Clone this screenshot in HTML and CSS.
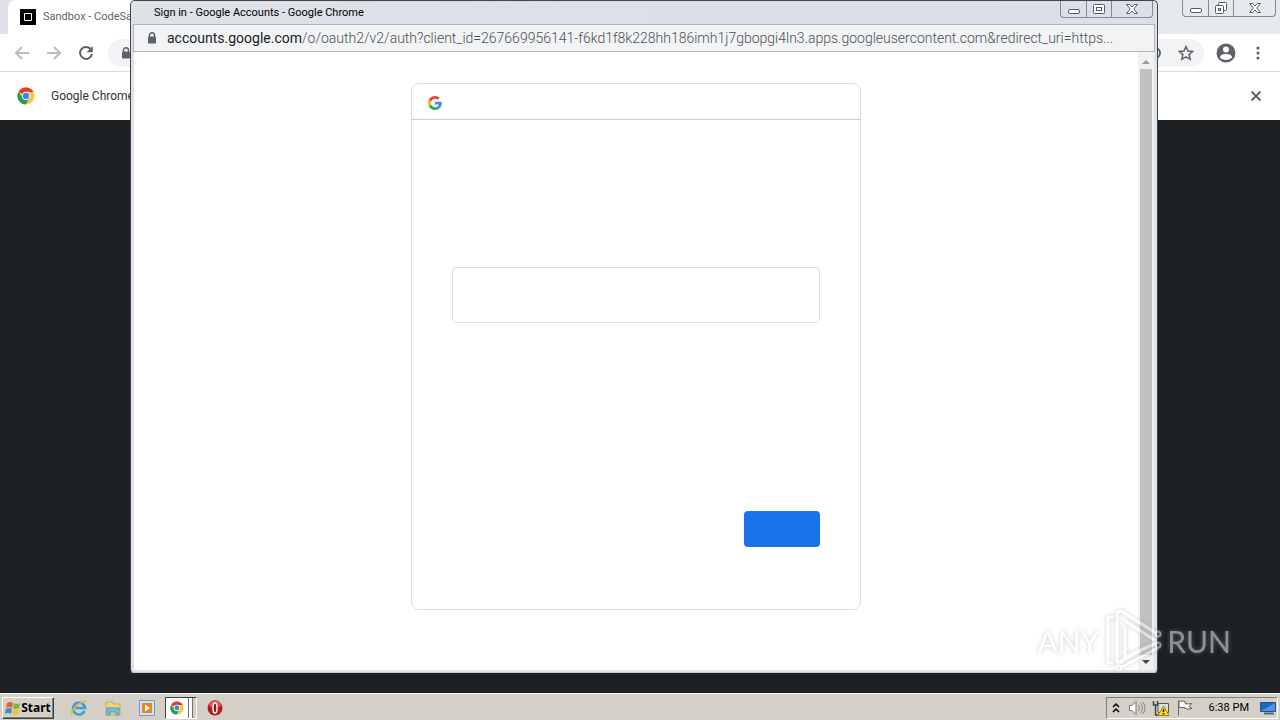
FILE: index.html
```html
<!DOCTYPE html>
<html lang="en">
<head>
<meta charset="utf-8">
<title>Sign in - Google Accounts</title>
<link rel="stylesheet" href="styles.css">
</head>
<body>
<svg class="defs" aria-hidden="true">
  <symbol id="chrome" viewBox="0 0 18 18">
    <circle cx="9" cy="9" r="8.5" fill="#fbc93c"/>
    <path d="M9 9 1.6 4.7A8.5 8.5 0 0 1 16.4 5H9z" fill="#e33b2e"/>
    <path d="M1.6 4.7A8.5 8.5 0 0 0 8.6 17.5L12.5 11 9 9 5.6 11z" fill="#1a9f56"/>
    <circle cx="9" cy="9" r="4.2" fill="#fff"/>
    <circle cx="9" cy="9" r="3.2" fill="#4285e8"/>
  </symbol>
  <symbol id="lock" viewBox="0 0 10 12">
    <path d="M2.5 5V3.3a2.5 2.5 0 0 1 5 0V5" fill="none" stroke="#5f6368" stroke-width="1.4"/>
    <rect x="1" y="4.5" width="8" height="7" rx="1" fill="#5f6368"/>
  </symbol>
  <symbol id="min" viewBox="0 0 12 12">
    <rect x=".5" y="6.500" width="11" height="4" rx="1.5" fill="#fff" stroke="#555b66"/>
  </symbol>
  <symbol id="max" viewBox="0 0 12 12">
    <rect x=".5" y="1.500" width="11" height="9" rx="1" fill="#fff" stroke="#555b66"/>
    <rect x="3.500" y="4.500" width="5" height="3" fill="#fff" stroke="#555b66"/>
  </symbol>
  <symbol id="restore" viewBox="0 0 14 14">
    <rect x="4.500" y="1.500" width="8" height="8" rx="1" fill="#fff" stroke="#555b66"/>
    <rect x="1.500" y="4.500" width="8" height="8" rx="1" fill="#fff" stroke="#555b66"/>
    <rect x="4.500" y="7.500" width="2" height="2" fill="#fff" stroke="#555b66"/>
  </symbol>
  <symbol id="close" viewBox="0 0 12 12">
    <path d="M.7 1.500h3L6 4l2.300-2.500h3L7.800 6l3.500 4.500h-3L6 8l-2.300 2.500h-3L4.200 6z" fill="#fff" stroke="#555b66"/>
  </symbol>
</svg>

<div class="desktop">
  <main class="browser">
    <header class="tabstrip">
      <div class="tab">
        <svg class="i16" viewBox="0 0 16 16"><path fill="#000" d="M0 0h16v16H0z"/><path fill="none" stroke="#fff" d="M4.500 4.500h7v7h-7z"/></svg>
        <span>Sandbox - CodeSandbox</span>
      </div>
      <div class="controls back-controls">
        <button aria-label="Minimize browser"><svg class="i12"><use href="#min"/></svg></button>
        <button aria-label="Restore browser"><svg class="i14"><use href="#restore"/></svg></button>
        <button class="wide" aria-label="Close browser"><svg class="i12"><use href="#close"/></svg></button>
      </div>
    </header>
    <nav class="toolbar">
      <button aria-label="Back"><svg class="i16" viewBox="0 0 16 16"><path d="M15 8H2M8 2 2 8l6 6" fill="none" stroke="#babcbe" stroke-width="2"/></svg></button>
      <button aria-label="Forward"><svg class="i16" viewBox="0 0 16 16"><path d="M1 8h13M8 2l6 6-6 6" fill="none" stroke="#babcbe" stroke-width="2"/></svg></button>
      <button aria-label="Reload"><svg class="i16" viewBox="0 0 16 16"><path d="M12.500 3.800A6 6 0 1 0 14 9" fill="none" stroke="#5f6368" stroke-width="2"/><path d="M14.800 1v6.200H8.600z" fill="#5f6368"/></svg></button>
      <div class="omnibox">
        <svg class="lock"><use href="#lock"/></svg>
        <span class="omni-right">
          <svg class="i14" viewBox="0 0 14 14"><circle cx="7" cy="7" r="5" fill="none" stroke="#5f6368" stroke-width="2"/></svg>
          <button aria-label="Bookmark"><svg class="i16" viewBox="0 0 16 16"><path d="m8 1.500 2 4.500 4.700.4-3.600 3.200 1.100 4.700L8 11.800l-4.200 2.500 1.100-4.700L1.300 6.400 6 6z" fill="none" stroke="#5f6368" stroke-width="1.500"/></svg></button>
        </span>
      </div>
      <div class="account">
        <button aria-label="Profile"><svg class="i20" viewBox="0 0 20 20"><circle cx="10" cy="10" r="9.500" fill="#5f6368"/><circle cx="10" cy="6.500" r="3" fill="#fff"/><path d="M4 14.500c0-4.600 12-4.600 12 0-2.500 3.300-9.500 3.300-12 0z" fill="#fff"/></svg></button>
        <button aria-label="Menu"><svg class="i16" viewBox="0 0 16 16" fill="#5f6368"><circle cx="8" cy="3" r="1.600"/><circle cx="8" cy="8" r="1.600"/><circle cx="8" cy="13" r="1.600"/></svg></button>
      </div>
    </nav>
    <div class="infobar">
      <svg class="i18"><use href="#chrome"/></svg>
      <span>Google Chrome</span>
      <button aria-label="Dismiss"><svg class="i12" viewBox="0 0 12 12"><path d="m1.500 1.500 9 9m0-9-9 9" stroke="#5f6368" stroke-width="2"/></svg></button>
    </div>
  </main>

  <section class="popup" aria-label="Sign in window">
    <header class="titlebar">
      <h1>Sign in - Google Accounts - Google Chrome</h1>
      <div class="controls">
        <button aria-label="Minimize"><svg class="i12"><use href="#min"/></svg></button>
        <button aria-label="Maximize"><svg class="i12"><use href="#max"/></svg></button>
        <button class="wide" aria-label="Close"><svg class="i12"><use href="#close"/></svg></button>
      </div>
    </header>
    <div class="address">
      <svg class="lock"><use href="#lock"/></svg>
      <span class="url"><b>accounts.google.com</b>/o/oauth2/v2/auth?client_id=267669956141-f6kd1f8k228hh186imh1j7gbopgi4ln3.apps.googleusercontent.com&amp;redirect_uri=https...</span>
    </div>
    <div class="page">
      <div class="content">
        <form class="card">
          <div class="card-head">
            <svg class="i14" viewBox="0 0 48 48"><path fill="#EA4335" d="M24 9.500c3.540 0 6.710 1.220 9.210 3.600l6.850-6.850C35.900 2.380 30.470 0 24 0 14.620 0 6.510 5.380 2.560 13.220l7.980 6.190C12.430 13.720 17.740 9.500 24 9.500z"/><path fill="#4285F4" d="M46.980 24.550c0-1.570-.15-3.090-.38-4.550H24v9.020h12.940c-.58 2.960-2.260 5.480-4.780 7.180l7.730 6c4.510-4.180 7.090-10.360 7.090-17.650z"/><path fill="#FBBC05" d="M10.530 28.590c-.48-1.450-.76-2.990-.76-4.590s.27-3.140.76-4.590l-7.980-6.190C.92 16.460 0 20.120 0 24s.92 7.540 2.560 10.780l7.970-6.190z"/><path fill="#34A853" d="M24 48c6.480 0 11.930-2.130 15.890-5.810l-7.730-6c-2.150 1.450-4.920 2.300-8.160 2.300-6.260 0-11.570-4.220-13.470-9.910l-7.980 6.190C6.510 42.620 14.620 48 24 48z"/></svg>
          </div>
          <div class="card-body">
            <input type="text" aria-label="Email or phone">
            <button type="button" aria-label="Next"></button>
          </div>
        </form>
      </div>
      <div class="scrollbar">
        <svg viewBox="0 0 8 4"><path d="M0 4h8L4 0z" fill="#9a9a9a"/></svg>
        <div class="thumb"></div>
        <svg viewBox="0 0 8 4"><path d="M0 0h8L4 4z" fill="#444"/></svg>
      </div>
    </div>
  </section>

  <div class="watermark">
    <span>ANY</span>
    <svg viewBox="0 0 60 64" fill="none"><path d="M11 8H5v46h5M20 53H14V4l4-2 35 22M22 18v30l31-14M22 12l31 20M53 34 14 54M55 39 17 59" stroke-width="3" stroke-linejoin="round"/><circle cx="55" cy="25" r="2.500" stroke-width="2"/><circle cx="55" cy="36" r="2.500" stroke-width="2"/><circle cx="16" cy="59" r="2.500" stroke-width="2"/></svg>
    <span>RUN</span>
  </div>

  <footer class="taskbar">
    <button class="start"><svg class="i16" viewBox="0 0 16 16"><path d="M2 3q3-2 6 0L7 8Q4 6 1 8z" fill="#e8642c"/><path d="M9 3q3 2 6 0l-1 5q-3 2-6 0z" fill="#78b943"/><path d="M1 9q3-2 6 0l-1 5q-3-2-6 0z" fill="#3c8bd8"/><path d="M8 9q3 2 6 0l-1 5q-3 2-6 0z" fill="#f5c52c"/></svg>Start</button>
    <div class="quick">
      <button aria-label="Internet Explorer"><svg class="i18" viewBox="0 0 18 18"><path d="M14.500 12A6 6 0 1 1 15 9H5" fill="none" stroke="#3aa0dc" stroke-width="2.600"/><path d="M2 16C-2 13 12 1 16.500 2.500" fill="none" stroke="#e9b93a" stroke-width="1.500"/></svg></button>
      <button aria-label="File Explorer"><svg class="i18" viewBox="0 0 18 18"><path d="M2 3h6l1 2h7v11H2z" fill="#ead67c" stroke="#c8ad52"/><path d="M3 9h12v7h-3v-3H6v3H3z" fill="#74bfe0" stroke="#549bbd"/></svg></button>
      <button aria-label="Media Player"><svg class="i18" viewBox="0 0 18 18"><path d="M1.500 1.500h15v15h-15z" fill="#cfe4f5" stroke="#6b9ccc"/><path d="M4 4h10v10H4z" fill="#ef8418"/><path d="m7 5.500 5 3.500-5 3.500z" fill="#fff"/></svg></button>
    </div>
    <button class="running" aria-label="Google Chrome"><svg class="i14"><use href="#chrome"/></svg></button>
    <button class="opera" aria-label="Opera"><svg class="i16" viewBox="0 0 16 16"><circle cx="8" cy="8" r="7.500" fill="#b51b20"/><path d="M2 6a6 6 0 0 1 12 0q-6 3-12 0z" fill="#d9595b"/><ellipse cx="8" cy="8" rx="2" ry="5" fill="#9c1016" stroke="#fff" stroke-width="1.500"/></svg></button>
    <div class="tray">
      <svg class="i12" viewBox="0 0 12 12"><path d="m3 5 3-3 3 3M3 10l3-3 3 3" fill="none" stroke="#000" stroke-width="1.500"/></svg>
      <svg class="i18" viewBox="0 0 18 18"><path d="M1.500 6.500H4l4-4v13l-4-4H1.500z" fill="#fff" stroke="#777"/><path d="M10.500 6q2 3 0 6M12.500 4q4 5 0 10M15 3q4 6 0 12" fill="none" stroke="#888"/></svg>
      <svg class="i18" viewBox="0 0 18 18"><path d="M6 4.500h10.500v9H6z" fill="#ddd" stroke="#555"/><path d="M1.500 2v4h4V2M3.500 6v10H8" fill="none" stroke="#444" stroke-width="1.500"/><path d="m11.500 7 5.500 9.500H6z" fill="#ffdc28" stroke="#a98200"/><path d="M11.500 10v3m0 1v1.500" stroke="#222" stroke-width="1.500"/></svg>
      <svg class="i18" viewBox="0 0 18 18"><path d="M2.500 16.500v-15M3 2.500q3-1 6 0v2q3 1 7 0l-3 3 3 2q-4 1-7 0v-1H3z" fill="#fff" stroke="#666"/></svg>
      <time>6:38 PM</time>
      <svg class="i16" viewBox="0 0 16 16"><path d="M.5 2.500h15v9H.5z" fill="#1d65c4" stroke="#2d4f87"/><path d="M1 11 15 3v8z" fill="#4c93e2"/><path d="M4 13.500h10" stroke="#47688e" stroke-width="2"/></svg>
    </div>
  </footer>
</div>
</body>
</html>
```
FILE: styles.css
```css
* { box-sizing: border-box; }
body { margin: 0; font: 11px/16px Roboto, "Open Sans", sans-serif; color: #111; }
button { padding: 0; border: 0; background: none; font: inherit; color: inherit; display: flex; align-items: center; justify-content: center; }
svg { display: block; flex: none; }
.defs { position: absolute; width: 0; height: 0; }
.i12 { width: 12px; height: 12px; }
.i14 { width: 14px; height: 14px; }
.i16 { width: 16px; height: 16px; }
.i18 { width: 18px; height: 18px; }
.i20 { width: 20px; height: 20px; }
.lock { width: 10px; height: 12px; }

.desktop { position: relative; height: 100vh; display: flex; flex-direction: column; overflow: hidden; background: #1c2023; }
.browser { flex: 1; }
.tabstrip { display: flex; justify-content: space-between; height: 34px; padding-left: 8px; background: linear-gradient(90deg, #dee1e6, #e7eaed); }
.tab { display: flex; align-items: center; gap: 7px; width: 240px; padding-left: 12px; border-radius: 8px 8px 0 0; background: #fff; font-size: 11px; color: #60646a; white-space: nowrap; }
.controls { display: flex; height: 18px; border: 1px solid #85888f; border-top: 0; border-radius: 0 0 4px 4px; }
.controls button { width: 25px; }
.controls button + button { border-left: 1px solid #85888f; }
.controls .wide { width: 42px; }
.back-controls { height: 17px; margin-right: 4px; }

.toolbar { display: flex; align-items: center; gap: 16px; height: 38px; padding: 0 14px; background: #fff; border-bottom: 1px solid #d6d8da; }
.omnibox { flex: 1; display: flex; align-items: center; justify-content: space-between; height: 28px; padding: 0 10px 0 13px; margin: 0 -4px 0 -2px; border-radius: 14px; background: #f1f3f4; }
.omni-right { display: flex; align-items: center; gap: 16px; }
.account { display: flex; align-items: center; gap: 14px; }
.infobar { display: flex; align-items: center; gap: 16px; height: 48px; padding: 0 18px 0 17px; background: #fff; font-size: 12px; color: #303336; }
.infobar button { margin-left: auto; }

.popup { position: absolute; top: 0; right: 122px; bottom: 47px; left: 130px; display: flex; flex-direction: column; padding: 0 2px 2px; border: 1px solid #40454b; border-bottom-color: #c4c8cd; border-radius: 5px 5px 4px 4px; background: #dfe2e8; }
.titlebar { display: flex; justify-content: space-between; height: 23px; padding: 0 2px 0 21px; background: linear-gradient(90deg, #dee1e6, #dcdfe8); }
.titlebar h1 { margin: 0; padding-top: 4px; font-size: 11px; line-height: 16px; font-weight: 400; color: #000; }
.titlebar .controls { height: 17px; }
.titlebar .wide { width: 41px; }
.address { display: flex; align-items: center; gap: 10px; height: 28px; padding: 0 13px; border: 1px solid #b0b2b5; background: #f1f3f4; }
.url { flex: 1; min-width: 0; overflow: hidden; white-space: nowrap; font-size: 14px; line-height: 20px; font-weight: 300; color: #4c5055; }
.url b { font-weight: 400; color: #202124; }
.page { flex: 1; display: flex; min-height: 0; margin: 0 1px; background: #fff; }
.content { flex: 1; padding: 31px 16px; }
.card { width: 100%; max-width: 450px; margin: 0 auto; border: 1px solid #dadce0; border-radius: 8px; }
.card-head { display: flex; align-items: center; height: 36px; padding: 2px 16px 0; border-bottom: 1px solid #c9cbce; }
.card-body { display: flex; flex-direction: column; padding: 147px 40px 62px; }
.card input { width: 100%; height: 56px; padding: 0 15px; border: 1px solid #dadce0; border-radius: 4px; background: #fff; font-size: 16px; }
.card button { align-self: flex-end; width: 76px; height: 36px; margin-top: 188px; border-radius: 4px; background: #1a73e8; }
.scrollbar { display: flex; flex-direction: column; align-items: center; gap: 5px; width: 16px; padding: 8px 2px 6px; background: #f1f1f1; }
.scrollbar svg { width: 8px; height: 4px; }
.thumb { flex: 1; width: 12px; background: #c1c1c1; }

.watermark { position: absolute; right: 49px; bottom: 47px; display: flex; align-items: center; gap: 4px; opacity: .5; color: #fff; font: 30px/64px Lato, sans-serif; filter: drop-shadow(0 0 2px #999); }
.watermark svg { width: 60px; height: 64px; stroke: #fff; }

.taskbar { display: flex; align-items: center; height: 27px; padding: 1px 2px 0; background: #d4d0c8; border-top: 1px solid #fff; }
.start { gap: 0; width: 52px; height: 22px; border: 1px solid; border-color: #fff #404040 #404040 #fff; box-shadow: inset -1px -1px #808080; font: bold 12px/16px "Noto Sans", sans-serif; color: #000; }
.quick { display: flex; gap: 16px; margin-left: 16px; }
.running { width: 32px; height: 22px; margin-left: 9px; padding-right: 8px; border: 1px solid; border-color: #404040 #fff #fff #404040; background: linear-gradient(90deg, #fff 22px, #77736c 22px, #77736c 23px, #fff 23px, #fff 26px, #77736c 26px, #77736c 27px, #d4d0c8 27px); }
.opera { margin-left: 10px; }
.tray { display: flex; align-items: center; gap: 6px; height: 22px; margin-left: auto; padding: 0 1px 0 3px; border: 1px solid; border-color: #808080 #fff #fff #808080; }
.tray time { margin: 0 5px 0 9px; white-space: nowrap; color: #000; }
```
